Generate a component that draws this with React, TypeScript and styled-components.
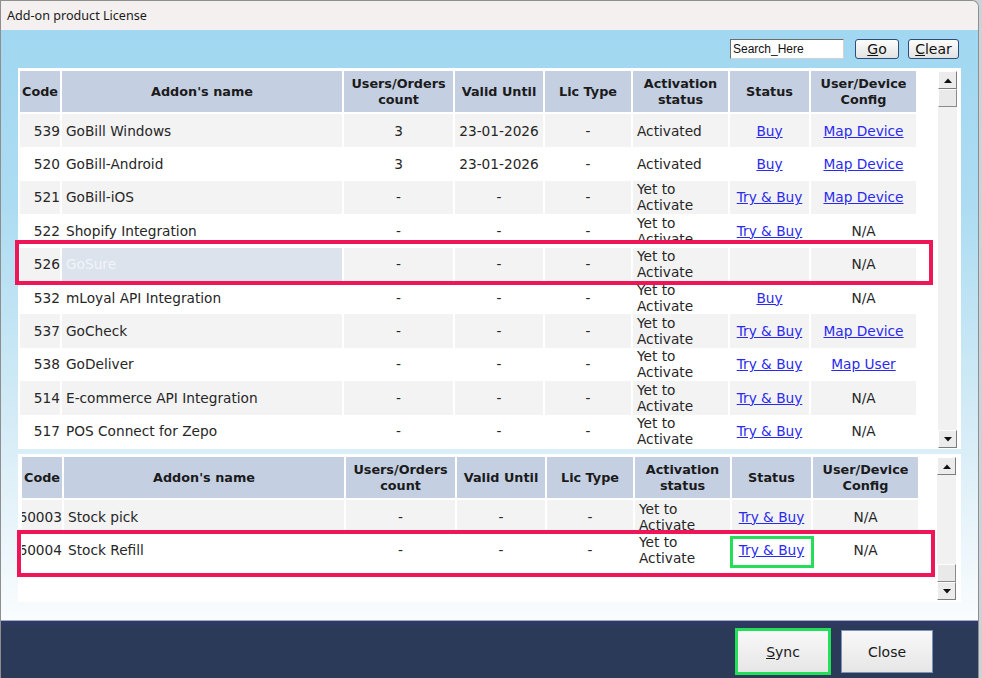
import styled, { createGlobalStyle } from 'styled-components';

type Align = 'left' | 'center' | 'right';

type AddonRow = {
  code: string;
  name: string;
  users: string;
  valid: string;
  lic: string;
  activation: string;
  status: string;
  config: string;
  selected?: boolean;
};

const columns = [42, 282, 111, 90, 88, 97, 81, 107];
const template = columns.map((w) => `${w}px`).join(' ');

const headers = [
  'Code',
  "Addon's name",
  'Users/Orders count',
  'Valid Until',
  'Lic Type',
  'Activation status',
  'Status',
  'User/Device Config',
];

const pending = { users: '-', valid: '-', lic: '-', activation: 'Yet to Activate' };

const mainRows: AddonRow[] = [
  { code: '539', name: 'GoBill Windows', users: '3', valid: '23-01-2026', lic: '-', activation: 'Activated', status: 'Buy', config: 'Map Device' },
  { code: '520', name: 'GoBill-Android', users: '3', valid: '23-01-2026', lic: '-', activation: 'Activated', status: 'Buy', config: 'Map Device' },
  { code: '521', name: 'GoBill-iOS', ...pending, status: 'Try & Buy', config: 'Map Device' },
  { code: '522', name: 'Shopify Integration', ...pending, status: 'Try & Buy', config: 'N/A' },
  { code: '526', name: 'GoSure', ...pending, status: '', config: 'N/A', selected: true },
  { code: '532', name: 'mLoyal API Integration', ...pending, status: 'Buy', config: 'N/A' },
  { code: '537', name: 'GoCheck', ...pending, status: 'Try & Buy', config: 'Map Device' },
  { code: '538', name: 'GoDeliver', ...pending, status: 'Try & Buy', config: 'Map User' },
  { code: '514', name: 'E-commerce API Integration', ...pending, status: 'Try & Buy', config: 'N/A' },
  { code: '517', name: 'POS Connect for Zepo', ...pending, status: 'Try & Buy', config: 'N/A' },
];

const stockRows: AddonRow[] = [
  { code: '60003', name: 'Stock pick', ...pending, status: 'Try & Buy', config: 'N/A' },
  { code: '60004', name: 'Stock Refill', ...pending, status: 'Try & Buy', config: 'N/A' },
];

const linkTexts = ['Buy', 'Try & Buy', 'Map Device', 'Map User'];

const GlobalStyle = createGlobalStyle`
  html, body {
    margin: 0;
    padding: 0;
    background: #cdd2d8;
  }
  body {
    width: 982px;
    height: 678px;
    overflow: hidden;
  }
`;

const Window = styled.div`
  width: 979px;
  height: 678px;
  box-sizing: border-box;
  border: 1px solid #8e8e8e;
  border-bottom: none;
  border-top-right-radius: 7px;
  overflow: hidden;
  display: flex;
  flex-direction: column;
  font-family: "DejaVu Sans", Verdana, sans-serif;
`;

const TitleBar = styled.div`
  height: 29px;
  flex-shrink: 0;
  display: flex;
  align-items: center;
  padding-left: 6px;
  background: #f4f0f0;
  font-family: "Noto Sans", "Open Sans", sans-serif;
  font-size: 12.6px;
  color: #1a1a1a;
`;

const Body = styled.div`
  height: 590px;
  flex-shrink: 0;
  box-sizing: border-box;
  padding: 9px 17px 0;
  display: flex;
  flex-direction: column;
  gap: 5px;
  background: linear-gradient(#a1d7f1 0%, #addcf2 30%, #d3ebf6 65%, #fafcfe 100%);
`;

const SearchRow = styled.div`
  height: 20px;
  margin-bottom: 4px;
  padding-right: 2px;
  display: flex;
  justify-content: flex-end;
  align-items: center;
`;

const SearchInput = styled.input`
  width: 114px;
  height: 20px;
  box-sizing: border-box;
  margin: 0 2px 0 0;
  padding: 0 2px;
  border: 1px solid;
  border-color: #6d6d6d #d2d2d2 #d2d2d2 #6d6d6d;
  background: #fff;
  font-family: "Liberation Sans", Arial, sans-serif;
  font-size: 12px;
  color: #111;
  outline: none;
`;

const ToolButton = styled.button<{ $width: number }>`
  width: ${(p) => p.$width}px;
  height: 20px;
  margin-left: 9px;
  padding: 0;
  border: 1px solid #2e4d79;
  border-radius: 3px;
  background: linear-gradient(#fdfdfd, #e2e2e2);
  font-family: "DejaVu Sans", Verdana, sans-serif;
  font-size: 14px;
  line-height: 17px;
  color: #111;
`;

const Panel = styled.div<{ $height: number; $inset: number }>`
  position: relative;
  width: 943px;
  height: ${(p) => p.$height}px;
  flex-shrink: 0;
  box-sizing: border-box;
  padding: 3px 0 0 ${(p) => p.$inset}px;
  display: flex;
  background: #fff;
`;

const TableArea = styled.div`
  width: 898px;
  flex-shrink: 0;
  display: flex;
  flex-direction: column;
  overflow: hidden;
`;

const HeaderRow = styled.div`
  display: grid;
  grid-template-columns: ${template};
  height: 43px;
  box-sizing: border-box;
  border-bottom: 2px solid #fff;
`;

const HeaderCell = styled.div`
  display: flex;
  align-items: center;
  justify-content: center;
  text-align: center;
  border-right: 2px solid #fff;
  background: #c4cfe2;
  font-weight: bold;
  font-size: 12.8px;
  line-height: 16px;
  color: #1b1b1b;
`;

const BodyRow = styled.div<{ $shaded: boolean }>`
  display: grid;
  grid-template-columns: ${template};
  height: 33.4px;
  flex-shrink: 0;
  background: ${(p) => (p.$shaded ? '#f3f3f3' : '#fff')};
`;

const justify: Record<Align, string> = { left: 'flex-start', center: 'center', right: 'flex-end' };

const Cell = styled.div<{ $align: Align; $selected?: boolean }>`
  display: flex;
  align-items: center;
  justify-content: ${(p) => justify[p.$align]};
  text-align: ${(p) => p.$align};
  padding: 0 ${(p) => (p.$align === 'right' ? '0' : '4px')};
  border-right: 2px solid #fff;
  overflow: hidden;
  white-space: ${(p) => (p.$align === 'right' ? 'nowrap' : 'normal')};
  font-size: 13.7px;
  line-height: 16px;
  color: ${(p) => (p.$selected ? '#f2f5f9' : '#262626')};
  background: ${(p) => (p.$selected ? '#dce3ec' : 'transparent')};
`;

const Link = styled.a`
  color: #2a2aee;
  text-decoration: underline;
  cursor: pointer;
  white-space: nowrap;
`;

const ScrollBar = styled.div<{ $gap: number; $bottom: number }>`
  width: 19px;
  margin: 0 0 ${(p) => p.$bottom}px ${(p) => p.$gap}px;
  flex-shrink: 0;
  display: flex;
  flex-direction: column;
  background: #f1f1f1;
`;

const ScrollButton = styled.div`
  height: 18px;
  flex-shrink: 0;
  box-sizing: border-box;
  display: flex;
  align-items: center;
  justify-content: center;
  border: 1px solid;
  border-color: #fdfdfd #7c7c7c #7c7c7c #fdfdfd;
  background: #ececec;
`;

const Thumb = styled.div`
  height: 18px;
  flex-shrink: 0;
  box-sizing: border-box;
  border: 1px solid;
  border-color: #fdfdfd #8a8a8a #8a8a8a #fdfdfd;
  background: #e9e9e9;
`;

const Track = styled.div`
  flex: 1;
`;

const Highlight = styled.div<{ $left: number; $top: number; $width: number; $height: number; $color: string; $size: number }>`
  position: absolute;
  left: ${(p) => p.$left}px;
  top: ${(p) => p.$top}px;
  width: ${(p) => p.$width}px;
  height: ${(p) => p.$height}px;
  box-sizing: border-box;
  border: ${(p) => p.$size}px solid ${(p) => p.$color};
  pointer-events: none;
`;

const Footer = styled.div`
  height: 58px;
  flex-shrink: 0;
  box-sizing: border-box;
  padding: 9px 45px 0 0;
  display: flex;
  justify-content: flex-end;
  gap: 12px;
  border-top: 1px solid #9fb0c0;
  background: linear-gradient(#31386a 0px, #2c3a5a 6px, #2b3a57 100%);
`;

const DialogButton = styled.button<{ $focused?: boolean }>`
  width: 92px;
  height: 43px;
  padding: 0;
  border: 1px solid ${(p) => (p.$focused ? '#9a9a9a' : '#7a93bb')};
  background: linear-gradient(#f8f8f8, #e6e6e6);
  font-family: "DejaVu Sans", Verdana, sans-serif;
  font-size: 14px;
  color: #1a1a1a;
  outline: ${(p) => (p.$focused ? '3px solid #24df5a' : 'none')};
  outline-offset: -1px;
`;

const Arrow = ({ down }: { down?: boolean }) => (
  <svg width="8" height="5" viewBox="0 0 8 5">
    <polygon points={down ? '0,0 8,0 4,4.5' : '0,5 8,5 4,0.5'} fill="#111" />
  </svg>
);

const renderValue = (text: string) =>
  linkTexts.includes(text) ? <Link>{text}</Link> : text;

const AddonTable = ({ rows }: { rows: AddonRow[] }) => (
  <TableArea>
    <HeaderRow>
      {headers.map((h) => (
        <HeaderCell key={h}>{h}</HeaderCell>
      ))}
    </HeaderRow>
    {rows.map((r, i) => (
      <BodyRow key={r.code} $shaded={i % 2 === 0}>
        <Cell $align="right">{r.code}</Cell>
        <Cell $align="left" $selected={r.selected}>{r.name}</Cell>
        <Cell $align="center">{r.users}</Cell>
        <Cell $align="center">{r.valid}</Cell>
        <Cell $align="center">{r.lic}</Cell>
        <Cell $align="left">{r.activation}</Cell>
        <Cell $align="center">{renderValue(r.status)}</Cell>
        <Cell $align="center">{renderValue(r.config)}</Cell>
      </BodyRow>
    ))}
  </TableArea>
);

export default function App() {
  return (
    <>
      <GlobalStyle />
      <Window>
        <TitleBar>Add-on product License</TitleBar>
        <Body>
          <SearchRow>
            <SearchInput defaultValue="Search_Here" />
            <ToolButton $width={44}>
              <u>G</u>o
            </ToolButton>
            <ToolButton $width={51}>
              <u>C</u>lear
            </ToolButton>
          </SearchRow>

          <Panel $height={381} $inset={2}>
            <AddonTable rows={mainRows} />
            <ScrollBar $gap={20} $bottom={1}>
              <ScrollButton>
                <Arrow />
              </ScrollButton>
              <Thumb />
              <Track />
              <ScrollButton>
                <Arrow down />
              </ScrollButton>
            </ScrollBar>
            <Highlight $left={-3} $top={172} $width={918} $height={45} $color="#ee1656" $size={4} />
          </Panel>

          <Panel $height={148} $inset={4}>
            <AddonTable rows={stockRows} />
            <ScrollBar $gap={17} $bottom={2}>
              <ScrollButton>
                <Arrow />
              </ScrollButton>
              <Track />
              <Thumb />
              <ScrollButton>
                <Arrow down />
              </ScrollButton>
            </ScrollBar>
            <Highlight $left={-1} $top={76} $width={918} $height={47} $color="#ee1656" $size={4} />
            <Highlight $left={712} $top={82} $width={84} $height={32} $color="#24dd58" $size={3} />
          </Panel>
        </Body>
        <Footer>
          <DialogButton $focused>
            <u>S</u>ync
          </DialogButton>
          <DialogButton>Close</DialogButton>
        </Footer>
      </Window>
    </>
  );
}
